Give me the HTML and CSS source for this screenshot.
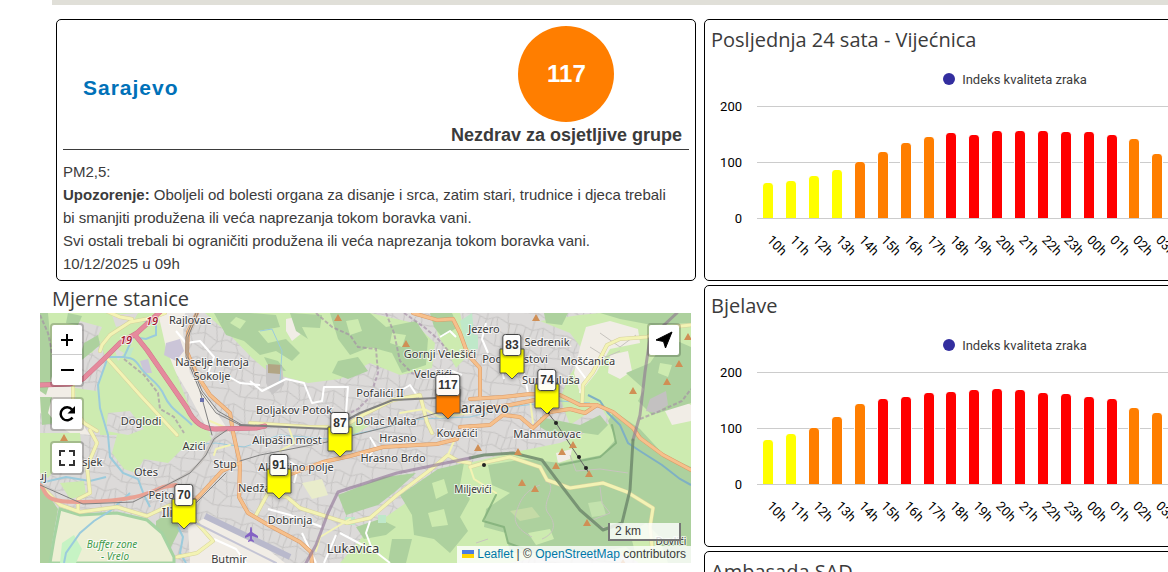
FILE: index.html
```html
<!DOCTYPE html>
<html lang="bs">
<head>
<meta charset="utf-8">
<title>Sarajevo - kvalitet zraka</title>
<link rel="stylesheet" href="styles.css">
</head>
<body>
<main class="page">
  <div class="topbar"></div>
  <div class="columns">
    <div class="column">
      <section class="card info">
        <header class="info-head">
          <h2 class="city"><a href="#sarajevo">Sarajevo</a></h2>
          <div class="index">
            <div class="index-circle">117</div>
            <div class="index-label">Nezdrav za osjetljive grupe</div>
          </div>
        </header>
        <p class="info-text">PM2,5:<br><b>Upozorenje:</b> Oboljeli od bolesti organa za disanje i srca, zatim stari, trudnice i djeca trebali<br>bi smanjiti produžena ili veća naprezanja tokom boravka vani.<br>Svi ostali trebali bi ograničiti produžena ili veća naprezanja tokom boravka vani.<br>10/12/2025 u 09h</p>
      </section>
      <h3 class="title map-title">Mjerne stanice</h3>
      <div class="map">
        <svg class="tiles" viewBox="0 0 651 250" preserveAspectRatio="xMinYMin slice">
          <defs>
            <pattern id="streets" width="47" height="37" patternUnits="userSpaceOnUse" patternTransform="rotate(14)">
              <path d="M0 6L12 9L22 4L34 8L47 6M0 18L10 21L24 16L38 22L47 18M0 30L14 28L26 33L47 30M12 9L10 21L14 28L12 37M12 0V9M34 8L38 22L32 32V37M32 0L34 8M22 4L24 16L26 33M5 7L4 19M18 6L17 18M43 7L42 20L44 30" fill="none" stroke="#c6c4c3" stroke-width="1"/>
            </pattern>
          </defs>
          <rect width="651" height="250" fill="#dcdad9"/>
          <rect width="651" height="250" fill="url(#streets)"/>

          <g fill="#f1ede6">
            <path d="M118 0L145 0L143 20L150 60L172 92L190 120L165 112L148 80L130 50L120 30Z"/>
            <path d="M10 62L32 60L35 100L50 122L30 120L0 100V78Z"/>
            <path d="M545 8L590 12L605 28L612 60L600 95L560 78L548 60L556 36Z"/>
            <path d="M165 205L210 222L245 250H150L148 214Z"/>
            <path d="M430 172L450 185L440 225L436 250H420L424 205Z"/>
          </g>
          <g fill="#cdebb0">
            <path d="M0 0H60L66 18L52 40L40 38L22 64L8 60L0 30Z"/>
            <path d="M60 0H118L126 35L152 100L172 122H60L56 80L66 46L60 30Z"/>
            <path d="M35 75L56 78L62 118L48 112L36 98Z"/>
            <path d="M165 0H330L374 10L395 30L392 55L360 62L330 50L300 66L268 70L230 60L212 45L190 22Z"/>
            <path d="M78 118L160 108L172 126L158 134L140 138L128 150L104 146L96 160L84 156L72 140Z"/>
            <path d="M392 0H420L430 40L416 55L398 22Z"/>
            <path d="M500 8L540 2L560 0H651V250H600L560 230L470 250H300L330 215L380 180L420 152L470 140L520 130L570 110L560 92L530 112L520 85L530 62L545 40L530 20Z"/>
            <path d="M0 120H40L42 140L20 150L8 165L0 160Z"/>
            <path d="M20 170L44 168L46 182L30 186Z"/>
            <path d="M300 112L320 106L330 112L314 122Z"/>
          </g>
          <g fill="#dcdad9">
            <path d="M40 8L62 14L54 32L40 44L28 40L30 20Z"/>
            <path d="M72 2L98 0L92 10L76 14Z"/>
            <path d="M68 100L90 98L104 116L88 122L66 118Z"/>
            <path d="M74 34L84 40L78 48Z"/>
          </g>
          <g fill="url(#streets)">
            <path d="M40 8L62 14L54 32L40 44L28 40L30 20Z"/>
            <path d="M68 100L90 98L104 116L88 122L66 118Z"/>
          </g>
          <g fill="#f1ede6">
            <path d="M546 14L570 8L598 16L600 30L570 36L556 60L540 80L534 60L540 34Z"/>
            <path d="M570 42L588 38L592 58L580 66L568 60Z"/>
            <path d="M612 50L636 42L646 66L626 78L610 70Z"/>
            <path d="M624 96L640 86L651 92V108L632 112Z"/>
            <path d="M246 6L256 4L262 20L252 28L246 18Z"/>
            <path d="M516 140L532 136L530 146L518 150Z"/>
          </g>
          <g fill="#add19e">
            <path d="M0 0L8 0L10 22L13 60L6 82L0 78Z"/>
            <path d="M28 0L42 3L38 12L26 10Z"/>
            <path d="M44 30L58 22L60 32L48 42L38 50Z"/>
            <path d="M0 84L12 84L8 100L16 110L2 112Z"/>
            <path d="M174 0L210 0L236 2L240 14L218 18L228 30L246 26L260 40L252 48L236 38L220 42L204 28L186 22Z"/>
            <path d="M250 0L282 2L280 15L262 14L268 26L256 18Z"/>
            <path d="M290 0L330 0L346 14L376 8L388 26L386 52L362 60L352 40L330 34L310 42L298 26Z"/>
            <path d="M298 48L318 44L328 58L308 66L292 60Z"/>
            <path d="M224 44L238 48L246 58L230 56Z"/>
            <path d="M390 0L412 0L418 14L402 24L394 14Z"/>
            <path d="M504 0L528 0L522 12L506 10Z"/>
            <path d="M560 0H651V10L612 12L580 6Z"/>
            <path d="M586 60L610 50L628 24L651 34V90L612 102L598 88L604 76Z"/>
            <path d="M574 98L600 116L624 142L651 154V250H604L586 234L550 240H470L466 220L444 214L446 196L470 180L452 172L448 152L486 146L520 150L562 142L576 126L568 108Z"/>
            <path d="M500 104L540 112L560 102L568 112L558 122L530 118L520 126L500 114Z"/>
            <path d="M298 182L344 164L376 160L356 178L338 192L306 202Z"/>
            <path d="M360 182L398 156L424 150L420 172L430 186L420 204L428 218L410 240L394 226L374 222L372 202Z"/>
            <path d="M316 214L340 206L356 214L346 222L324 226Z"/>
            <path d="M352 226L372 226L366 250H348Z"/>
            <path d="M0 170L18 196L12 230L10 250H0Z"/>
            <path d="M116 208L132 198L140 216L128 240L116 226Z"/>
          </g>
          <g fill="#cdebb0">
            <path d="M196 4L206 8L200 16L190 10ZM306 8L318 6L322 18L310 22ZM352 20L366 22L362 34L350 30ZM392 170L404 166L408 180L396 186ZM388 200L404 196L408 212L392 214ZM620 50L632 52L628 64L618 60ZM488 220L510 216L514 226L496 232Z"/>
          </g>
          <path d="M20 196L40 202L77 200L107 207L122 220L134 244V250H10L14 226Z" fill="#ecefd4" stroke="#a5d3a2" stroke-width="3"/>
          <path d="M22 230L34 222L42 236L36 250H20Z" fill="#c6f3c4"/>
          <path d="M590 220L606 210L618 222L628 250H598Z" fill="#cdebb0"/>
          <path d="M548 190L562 188L566 202L552 204Z" fill="#c3e2ad"/>
          <path d="M470 198L492 194L500 204L480 208Z" fill="#c4dba6"/>
          <path d="M262 170L282 166L288 182L272 186Z" fill="#e9eccb"/>
          <path d="M226 52L242 52L244 72L232 82L226 70Z" fill="#c8c6c6"/>
          <path d="M228 51L242 52L240 61L228 60Z" fill="#b2a584"/>
          <path d="M610 86L626 78L628 92L616 100L606 98Z" fill="#c3c1c1"/>
          <g fill="#bfe8c9"><path d="M420 8L432 0L436 40L426 34Z"/><path d="M430 22H438V36H430Z"/><path d="M305 204H315V212H305Z"/><path d="M338 202H346V210H338Z"/><path d="M88 36L94 34L90 44H86Z"/></g>
          <g fill="#cbc5d8"><path d="M126 30L140 26L144 38L136 48L124 42Z"/><path d="M100 48L108 46L112 60L104 60Z"/></g>

          <g fill="none" stroke="#9bcbdc" stroke-width="2">
            <path d="M100 6L116 12L116 22L106 26L93 24L84 44L68 44L58 72L60 95L68 122L70 144L83 160L98 166L104 182L110 194"/>
            <path d="M152 112C140 100 130 96 124 82S108 66 100 54S88 46 84 44"/>
            <path d="M90 180L70 198L54 208L40 220L26 240L24 250M0 170L26 164L50 168L66 164"/>
            <path d="M138 214L143 224L140 240L146 250"/>
            <path d="M152 132L176 130L204 134L240 122L290 126L330 118L380 106L430 104L470 94L520 88L550 90" stroke-width="1"/>
            <path d="M548 82L560 88L568 100L580 112L588 130L600 138L622 152L640 166L651 172" stroke="#7fb0c4"/>
            <path d="M240 68L242 38L232 16L220 18" stroke-width="1"/>
          </g>

          <g fill="none" stroke="#fff" stroke-width="2" stroke-linejoin="round">
            <path d="M210 68L222 78L246 66L264 70L272 90L282 88L284 74L308 74L306 100"/>
            <path d="M136 18L146 30L160 28L174 44L168 60L186 62L200 70L220 72"/>
            <path d="M246 146L258 154L254 170M228 196L250 202L282 214M330 208L326 220L332 236L350 250M262 220L276 250M296 222L284 250M300 220L330 236"/>
            <path d="M174 226L196 236L206 250M448 40L442 26L446 10M460 48L464 66M484 60L488 80M400 24L410 18L416 24M534 50L546 66L540 80"/>
            <path d="M360 78L370 72L378 84M412 58L422 62M330 124L336 134L328 144"/>
          </g>
          <g fill="none" stroke="#c7c4be" stroke-width="1">
            <path d="M505 168C520 172 500 190 508 200S516 220 502 226M500 172C484 178 480 188 476 200S484 220 492 224"/>
            <path d="M560 174L562 190L570 200L550 208L566 216M530 142L536 158L560 156L588 160M436 230L448 226"/>
            <path d="M560 20L580 34L596 22M550 34L566 44L580 38M470 10L466 30L480 24"/>
          </g>
          <g fill="none" stroke="#a389a5" stroke-width="2" stroke-dasharray="4 2" opacity=".6">
            <path d="M276 0L292 14L310 22L318 34L336 36L338 60L330 84L318 96L306 102"/>
            <path d="M346 0L354 20L360 48L372 60L400 66"/>
            <path d="M364 0L384 14L398 26L410 40"/>
            <path d="M0 2L8 20L14 50L30 58"/>
            <path d="M84 46L104 62L118 80L120 96L134 104L144 120"/>
            <path d="M600 106L620 98L642 88L651 76"/>
          </g>

          <g fill="none" stroke-linejoin="round" stroke-linecap="round">
            <g stroke="#d6d19c" stroke-width="4">
              <path d="M33 72L33 95L44 110L57 118M67 45L100 82L137 122M60 38L62 32L70 22L90 9L112 5L125 0M66 -2L80 4L92 6"/>
              <path d="M0 172L20 192L40 199L77 194L107 203L130 192L150 196L157 210L173 228L157 240L137 244M50 117L57 130L47 154L50 180L38 186V197"/>
              <path d="M210 110L270 114L303 114L323 102L353 87L380 82L387 109L392 120M216 202L228 180L247 184L260 195L307 210L330 205L357 182L390 157L408 142L418 148L430 150"/>
              <path d="M651 12L623 15L607 24L580 26L567 32L553 59L543 72L542 92"/>
              <path d="M430 154L447 149L470 144L500 154L507 167L530 175L563 170L587 179L613 195L610 214L612 234"/>
            </g>
            <g stroke="#f3f3b4" stroke-width="3">
              <path d="M33 72L33 95L44 110L57 118M67 45L100 82L137 122M60 38L62 32L70 22L90 9L112 5L125 0M66 -2L80 4L92 6"/>
              <path d="M0 172L20 192L40 199L77 194L107 203L130 192L150 196L157 210L173 228L157 240L137 244M50 117L57 130L47 154L50 180L38 186V197"/>
              <path d="M210 110L270 114L303 114L323 102L353 87L380 82L387 109L392 120M216 202L228 180L247 184L260 195L307 210L330 205L357 182L390 157L408 142L418 148L430 150"/>
              <path d="M651 12L623 15L607 24L580 26L567 32L553 59L543 72L542 92"/>
              <path d="M430 154L447 149L470 144L500 154L507 167L530 175L563 170L587 179L613 195L610 214L612 234"/>
            </g>
            <g stroke="#f3f3b4" stroke-width="2">
              <path d="M174 142L176 136L190 132M310 206L280 224L276 238M414 128L408 142M248 112L254 130L240 138M430 154L434 166L456 180M490 86L493 110"/>
              <path d="M193 118L170 108M360 100L384 96L400 104L430 100"/>
            </g>
            <path d="M187 117C176 120 170 130 166 140S150 162 123 174" stroke="#c9c5c2" stroke-width="3"/>
            <path d="M136 172L123 174C106 182 90 188 43 189S10 178 -2 170" stroke="#e9a294" stroke-width="4"/>
            <g stroke="#db9a66" stroke-width="4">
              <path d="M158 -2L148 19L147 39L157 62L170 82L190 100L193 119L197 137L200 150L199 184L208 200L230 213L260 229L271 239L272 252"/>
              <path d="M243 164L283 149L310 143L343 134L377 132L397 131L417 126M200 150L182 158L160 182L146 196"/>
              <path d="M430 86L463 84L490 81L520 82L540 92L557 92L573 99L593 115L600 125L623 142L651 157M420 114L450 112L463 102L480 104L493 115L510 99L530 96L545 100L557 92"/>
              <path d="M373 0L397 7L413 6L420 20L428 42L440 55L440 85M440 96L470 92L500 86"/>
            </g>
            <g stroke="#f6c08c" stroke-width="3">
              <path d="M158 -2L148 19L147 39L157 62L170 82L190 100L193 119L197 137L200 150L199 184L208 200L230 213L260 229L271 239L272 252"/>
              <path d="M243 164L283 149L310 143L343 134L377 132L397 131L417 126M200 150L182 158L160 182L146 196"/>
              <path d="M430 86L463 84L490 81L520 82L540 92L557 92L573 99L593 115L600 125L623 142L651 157M420 114L450 112L463 102L480 104L493 115L510 99L530 96L545 100L557 92"/>
              <path d="M373 0L397 7L413 6L420 20L428 42L440 55L440 85M440 96L470 92L500 86"/>
            </g>
            <path d="M-2 72L30 71L43 66L66 44L80 30L97 20L122 -3M95 22L107 37L147 95C153 108 162 116 175 116L216 115L225 113" stroke="#cf7488" stroke-width="5"/>
            <path d="M-2 72L30 71L43 66L66 44L80 30L97 20L122 -3M95 22L107 37L147 95C153 108 162 116 175 116L216 115L225 113" stroke="#e58a9d" stroke-width="4"/>
            <g stroke="#808080" stroke-width="1">
              <path d="M156 0L146 24L146 44L160 78L172 122M160 78L176 100L200 112M187 117L174 126L166 142L150 160L123 174L93 189L43 191L0 172"/>
              <path d="M158 0L148 24L148 44L162 78L178 98L202 112"/>
              <path d="M186 160L150 196M200 148L220 142L287 129L343 115L397 100L420 95"/>
              <path d="M200 112L290 116L320 100L353 87L397 85" stroke-width="2"/>
            </g>
            <path d="M165 203L250 244" stroke="#b9b9cc" stroke-width="6" stroke-linecap="butt"/>
            <path d="M152 208L236 250" stroke="#c4c4d4" stroke-width="2"/>
            <path d="M637 0L610 25L605 59L600 102L593 127" stroke="#8f7592" stroke-width="3" opacity=".6"/>
            <path d="M593 127L590 177L582 210L563 217L540 197L517 167L502 147L473 140L444 142L430 145" stroke="#6f8a6c" stroke-width="3" opacity=".85"/>
            <path d="M430 145L357 160L298 179L288 200L276 232L266 250" stroke="#94799a" stroke-width="3" opacity=".65"/>
            <path d="M572 112L576 130L560 144L520 152M456 182L443 208L464 214L468 230L490 238" stroke="#7fae78" stroke-width="2" opacity=".8"/>
            <path d="M508 100L516 110L533 136L549 160" stroke="#666" stroke-width="1"/>
          </g>
          <g fill="#222"><circle cx="508" cy="99" r="2"/><circle cx="516" cy="110" r="2"/><circle cx="539" cy="144" r="2"/><circle cx="546" cy="155" r="2"/><circle cx="444" cy="152" r="2"/></g>
          <rect x="160" y="85" width="4" height="4" fill="#6b72b0"/>
          <path d="M211 214C212 214 212 216 212 219L218 223V225L212 223L212 226L214 228V229L211 228L208 229V228L210 226V223L205 225V223L210 219C210 216 210 214 211 214Z" fill="#8461c4"/>
          <g fill="#d08f55">
            <path d="M496 1L500 8H492ZM648 20L652 27H644ZM639 47L643 54H635ZM627 65L631 72H623ZM593 74L597 81H589ZM533 128L537 135H529ZM438 131L442 138H434ZM478 135L482 142H474ZM522 135L526 142H518ZM516 149L520 156H512ZM482 166L486 173H478ZM495 172L499 179H491ZM549 157L553 164H545ZM547 206L551 213H543ZM298 1L302 8H294ZM366 27L370 34H362ZM24 121L28 128H20ZM583 246L587 253H579Z"/>
          </g>

          <g class="place">
            <text x="150" y="11">Rajlovac</text>
            <text x="172" y="53">Naselje heroja</text>
            <text x="172" y="67">Sokolje</text>
            <text x="101" y="112">Doglodi</text>
            <text x="154" y="137">Azići</text>
            <text x="185" y="155">Stup</text>
            <text x="106" y="163">Otes</text>
            <text x="48" y="153">Osjek</text>
            <text x="2" y="167">uj</text>
            <text x="125" y="186">Pejton</text>
            <text x="222" y="179">Nedžarići</text>
            <text x="247" y="131">Alipašin most</text>
            <text x="254" y="101">Boljakov Potok</text>
            <text x="256" y="158">Alipašino polje</text>
            <text x="250" y="211">Dobrinja</text>
            <text x="189" y="250">Butmir</text>
            <text x="340" y="84">Pofalići II</text>
            <text x="346" y="112">Dolac Malta</text>
            <text x="358" y="129">Hrasno</text>
            <text x="353" y="149">Hrasno Brdo</text>
            <text x="417" y="124">Kovačići</text>
            <text x="393" y="65">Velešići</text>
            <text x="400" y="45">Gornji Velešići</text>
            <text x="444" y="20">Jezero</text>
            <text x="507" y="33">Sedrenik</text>
            <text x="475" y="50">Pod Hrastovi</text>
            <text x="548" y="52">Mošćanica</text>
            <text x="511" y="71">Sumbuluša</text>
            <text x="507" y="125">Mahmutovac</text>
          </g>
          <g class="place place-small">
            <text x="433" y="180">Miljevići</text>
            <text x="631" y="232">Dovlići</text>
          </g>
          <g class="place place-town">
            <text x="138" y="204">Ilidža</text>
            <text x="313" y="240">Lukavica</text>
          </g>
          <g class="place place-city"><text x="441" y="100">Sarajevo</text></g>
          <g class="place place-park">
            <text x="72" y="235">Buffer zone</text>
            <text x="75" y="247">- Vrelo</text>
          </g>
          <g class="place place-road">
            <text x="86" y="31">19</text>
            <text x="112" y="12">19</text>
          </g>
        </svg>

        <div class="markers" id="markers"></div>

        <div class="controls controls-left">
          <div class="bar">
            <button type="button" aria-label="Uvećaj"><svg viewBox="0 0 30 30"><path d="M9 15H21M15 9V21" stroke="#000" stroke-width="2"/></svg></button>
            <button type="button" aria-label="Umanji"><svg viewBox="0 0 30 30"><path d="M9 15H22" stroke="#000" stroke-width="2"/></svg></button>
          </div>
          <div class="bar">
            <button type="button" aria-label="Osvježi"><svg viewBox="0 0 30 30"><path d="M20 10.500A6.500 6.500 0 1 0 20.500 18.500" fill="none" stroke="#000" stroke-width="2.500"/><path d="M23 7V14.500H15.500Z"/></svg></button>
          </div>
          <div class="bar">
            <button type="button" aria-label="Puni ekran"><svg viewBox="0 0 30 30"><path d="M8 13V8H13M17 8H22V13M22 17V22H17M13 22H8V17" fill="none" stroke="#333" stroke-width="2"/></svg></button>
          </div>
        </div>
        <div class="controls controls-right">
          <div class="bar">
            <button type="button" aria-label="Moja lokacija"><svg viewBox="0 0 30 30"><path d="M23 7L16.500 23L14.500 16.500L7 15Z" stroke="#000" stroke-linejoin="round"/></svg></button>
          </div>
        </div>
        <div class="map-foot">
          <div class="scale">2 km</div>
          <div class="attribution">
            <a href="#leaflet"><svg class="flag" width="12" height="8" viewBox="0 0 12 8"><path d="M0 0H12V4H0Z" fill="#4c7be1"/><path d="M0 4H12V8H0Z" fill="#ffd500"/></svg> Leaflet</a> | © <a href="#osm">OpenStreetMap</a> contributors
          </div>
        </div>
      </div>
    </div>

    <div class="column">
      <section class="card station">
        <h3 class="title">Posljednja 24 sata - Vijećnica</h3>
        <div class="chart" data-values="62,66,75,86,100,118,134,144,151,149,155,155,155,153,153,149,141,114"></div>
      </section>
      <section class="card station">
        <h3 class="title">Bjelave</h3>
        <div class="chart" data-values="78,89,100,119,142,151,156,162,165,167,169,167,163,160,156,151,135,126"></div>
      </section>
      <section class="card station">
        <h3 class="title">Ambasada SAD</h3>
      </section>
    </div>
  </div>
</main>
<script src="app.js"></script>
</body>
</html>
```
FILE: styles.css
```css
* { box-sizing: border-box; }
html, body { height: 100%; }
body {
  margin: 0;
  background: #fff;
  color: #3b3b3b;
  font-family: "Liberation Sans", Arial, sans-serif;
  font-size: 15px;
  overflow: hidden;
}
.page { padding-left: 52px; }
.topbar { height: 5px; background: #e0dfd8; }
.columns {
  display: grid;
  grid-template-columns: minmax(0, 1fr) minmax(0, 1fr);
  width: calc(100% + 180px);
  padding-top: 14px;
}
.card {
  margin: 0 4px 4px;
  border: 1px solid #000;
  border-radius: 5px;
  padding: 6px;
}
.title {
  margin: 0;
  font-family: "Segoe UI", "Open Sans", "Noto Sans", sans-serif;
  font-size: 20px;
  font-weight: 400;
  line-height: 28px;
}

/* City summary */
.info { min-height: 262px; padding-bottom: 5px; }
.info-head {
  display: flex;
  justify-content: space-between;
  align-items: center;
  border-bottom: 1px solid #3b3b3b;
}
.city { margin: 0; padding-left: 20px; font-size: 21px; letter-spacing: 1px; }
.city a { color: #0071b8; text-decoration: none; }
.index { display: flex; flex-direction: column; align-items: center; padding-right: 7px; }
.index-circle {
  display: grid;
  place-items: center;
  width: 96px;
  height: 96px;
  border-radius: 50%;
  background: #ff7e00;
  color: #fff;
  font-size: 24px;
  font-weight: 700;
}
.index-label { font-size: 18px; font-weight: 700; line-height: 27px; }
.info-text { margin: 10px 0 0; line-height: 23px; white-space: nowrap; }

/* Map */
.map {
  position: relative;
  height: 250px;
  margin: 0 9px 0 -12px;
  overflow: hidden;
  font-size: 12px;
}
.tiles { display: block; width: 100%; height: 100%; }
.place {
  font-family: "Noto Sans", sans-serif;
  font-size: 11px;
  fill: #3a3a3a;
  text-anchor: middle;
  paint-order: stroke;
  stroke: rgba(255, 255, 255, .7);
  stroke-width: 2px;
}
.place-small { font-size: 10px; }
.place-town { font-size: 13px; }
.place-city { font-size: 14px; }
.place-park { font-size: 10px; font-style: italic; fill: #3f9a4c; }
.place-road { font-size: 11px; font-style: italic; font-weight: 500; fill: #a3122c; }

.marker { position: absolute; width: 26px; height: 46px; transform: translate(-50%, -100%); }
.marker svg { position: absolute; left: 0; bottom: 0; width: 26px; height: 32px; filter: drop-shadow(0 1px 2px rgba(0, 0, 0, .4)); }
.marker-value {
  position: absolute;
  top: 0;
  left: 50%;
  transform: translateX(-50%);
  padding: 0 2px;
  border: 1px solid #444;
  border-radius: 3px;
  background: rgba(255, 255, 255, .95);
  color: #333;
  font-weight: 700;
  line-height: 20px;
  box-shadow: 0 1px 3px rgba(0, 0, 0, .4);
}

.controls { position: absolute; top: 10px; display: flex; flex-direction: column; gap: 10px; }
.controls-left { left: 10px; }
.controls-right { right: 10px; }
.bar {
  display: flex;
  flex-direction: column;
  border: 2px solid rgba(0, 0, 0, .2);
  border-radius: 4px;
  background: #fff;
  background-clip: padding-box;
}
.bar button { width: 30px; height: 30px; padding: 0; border: 0; background: none; }
.bar button + button { box-shadow: 0 -1px #ccc; }
.bar svg { display: block; width: 30px; height: 30px; }

.map-foot {
  position: absolute;
  right: 0;
  bottom: 0;
  display: flex;
  flex-direction: column;
  align-items: flex-end;
  gap: 5px;
}
.scale {
  width: 73px;
  height: 18px;
  margin-right: 10px;
  padding: 0 5px;
  border: 2px solid #777;
  border-top: 0;
  background: rgba(255, 255, 255, .8);
  line-height: 17px;
}
.attribution { padding: 0 5px; background: rgba(255, 255, 255, .8); line-height: 17px; }
.attribution a { color: #0078a8; text-decoration: none; }

/* Station charts */
.station { height: 262px; }
.chart { font-family: Roboto, sans-serif; font-size: 13px; }
.legend {
  display: flex;
  align-items: center;
  justify-content: center;
  gap: 7px;
  height: 20px;
  margin: 15px 18px 17px 0;
}
.legend-dot { width: 12px; height: 12px; border-radius: 50%; background: #332e9f; }
.chart-body { display: grid; grid-template-columns: 31px 1fr; column-gap: 15px; padding-right: 31px; }
.axis {
  display: flex;
  flex-direction: column;
  justify-content: space-between;
  height: 113px;
  color: #000;
}
.axis span { display: flex; align-items: center; justify-content: flex-end; height: 1px; }
.plot {
  display: grid;
  grid-template-columns: repeat(24, minmax(0, 1fr));
  align-items: end;
  height: 113px;
  background:
    linear-gradient(#ccc, #ccc) 0 0 / 100% 1px no-repeat,
    linear-gradient(#ccc, #ccc) 0 50% / 100% 1px no-repeat,
    linear-gradient(#ccc, #ccc) 0 100% / 100% 1px no-repeat;
}
.slot { display: flex; justify-content: center; align-items: flex-end; height: 112px; margin-bottom: 1px; }
.slot i { width: 12px; border: solid #fff; border-width: 0 1px; border-radius: 4px 4px 0 0; }
.yellow { background: #ff0; }
.orange { background: #ff7e00; }
.red { background: #f00; }
.hours {
  display: grid;
  grid-column: 2;
  grid-template-columns: repeat(24, minmax(0, 1fr));
  padding-top: 11px;
  color: #000;
}
.hours span { padding-left: 12px; line-height: 16px; transform: rotate(45deg); transform-origin: 12px 50%; }
```
FILE: app.js
```js
const stations = [
  { value: 83, x: 472, y: 67, color: '#ff0' },
  { value: 74, x: 507, y: 102, color: '#ff0' },
  { value: 117, x: 408, y: 107, color: '#ff7e00' },
  { value: 87, x: 300, y: 145, color: '#ff0' },
  { value: 91, x: 239, y: 187, color: '#ff0' },
  { value: 70, x: 144, y: 217, color: '#ff0' }
];

document.getElementById('markers').innerHTML = stations.map(s =>
  `<div class="marker" style="left:${s.x}px;top:${s.y}px">
    <svg viewBox="0 0 26 32"><path d="M1 1H25V25H19L13 31L7 25H1Z" fill="${s.color}" stroke="#555"/></svg>
    <span class="marker-value">${s.value}</span>
  </div>`).join('');

const level = v => v >= 149 ? 'red' : v >= 100 ? 'orange' : 'yellow';
const hour = i => String((10 + i) % 24).padStart(2, '0') + 'h';

document.querySelectorAll('.chart').forEach(chart => {
  const values = chart.dataset.values.split(',').map(Number);
  const bars = values.map(v => `<div class="slot"><i class="${level(v)}" style="height:${v / 2}%"></i></div>`).join('');
  const hours = values.map((v, i) => `<span>${hour(i)}</span>`).join('');
  chart.innerHTML = `
    <div class="legend"><span class="legend-dot"></span><span>Indeks kvaliteta zraka</span></div>
    <div class="chart-body">
      <div class="axis"><span>200</span><span>100</span><span>0</span></div>
      <div class="plot">${bars}</div>
      <div class="hours">${hours}</div>
    </div>`;
});
```
